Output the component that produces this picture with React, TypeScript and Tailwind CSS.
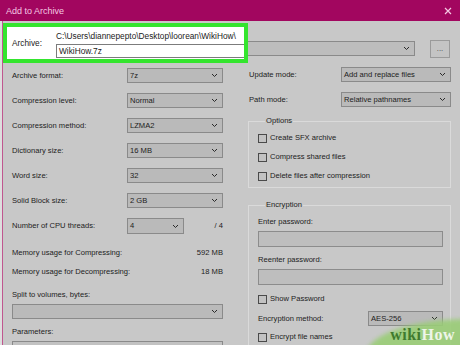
import React from 'react';

const Chevron: React.FC = () => (
  <svg width="7" height="5" viewBox="0 0 7 5" className="shrink-0">
    <path d="M1 1 L3.5 3.5 L6 1" fill="none" stroke="#2a2a2a" strokeWidth="1" />
  </svg>
);

const Combo: React.FC<{ value?: string; className?: string }> = ({ value = '', className = '' }) => (
  <div
    className={`flex items-center justify-between h-[15px] bg-[#bababa] border border-[#8a8a8a] pl-[2px] pr-[4px] ${className}`}
  >
    <span className="leading-[10px] text-[#1c1c1c]">{value}</span>
    <Chevron />
  </div>
);

const Row: React.FC<{ label: string; value: string; className?: string }> = ({ label, value, className = '' }) => (
  <div className={`flex items-center ${className}`}>
    <span className="w-[115px] leading-[10px]">{label}</span>
    <Combo value={value} className="w-[96px]" />
  </div>
);

const Check: React.FC<{ label: string; className?: string }> = ({ label, className = '' }) => (
  <div className={`flex items-center gap-[3px] h-[10px] ${className}`}>
    <span className="w-[9px] h-[9px] border border-[#4a4a4a] bg-[#c2c2c2]" />
    <span className="leading-[10px]">{label}</span>
  </div>
);

export default function App() {
  return (
    <div
      className="relative w-[460px] h-[345px] overflow-hidden bg-[#c8c8c8] text-[#1c1c1c] text-[7.6px]"
      style={{ fontFamily: '"Liberation Sans", Arial, sans-serif' }}
    >
      {/* title bar */}
      <div className="flex items-center justify-between h-[21px] bg-[#a2065f] pl-[6px] pr-[8px]">
        <span className="text-[9px] text-[#f4c8e2] leading-[12px]">Add to Archive</span>
        <svg width="8" height="8" viewBox="0 0 8 8">
          <path d="M1 1 L7 7 M7 1 L1 7" stroke="#f4c8e2" strokeWidth="1.2" />
        </svg>
      </div>

      <div className="flex h-[324px]">
        <div className="w-[2px] bg-[#dedede]" />
        <div className="w-[1px] bg-[#c0578f]" />

        <div className="flex-1 flex flex-col">
          {/* archive row */}
          <div className="flex items-start mt-[2px]">
            <div className="w-[245px] h-[40px] border-4 border-[#34e52e] bg-white flex items-center pl-[5px]">
              <span className="w-[44px] text-[8.3px] leading-[10px] text-[#222]">Archive:</span>
              <div className="flex-1 flex flex-col pt-[1px]">
                <span className="text-[8.3px] leading-[12px] text-[#222]">
                  C:\Users\diannepepto\Desktop\loorean\WikiHow\
                </span>
                <div className="mt-[2px] h-[14px] border border-[#7c7c7c] border-r-0 bg-white pl-[2px] flex items-center">
                  <span className="text-[8.3px] leading-[10px] text-[#222]">WikiHow.7z</span>
                </div>
              </div>
            </div>
            <div className="flex-1 mt-[18px] h-[15px] border-y border-r border-[#8a8a8a] bg-[#bdbdbd] flex items-center justify-end pr-[4px]">
              <Chevron />
            </div>
            <div className="ml-[15px] mr-[10px] mt-[17px] w-[20px] h-[18px] border border-[#9a9a9a] bg-[#c4c4c4] flex items-center justify-center">
              <span className="leading-[8px] text-[#444]">...</span>
            </div>
          </div>

          {/* two columns */}
          <div className="flex mt-[4px]">
            {/* left column */}
            <div className="w-[237px] pl-[9px] flex flex-col">
              <Row label="Archive format:" value="7z" className="mt-[1px]" />
              <Row label="Compression level:" value="Normal" className="mt-[10px]" />
              <Row label="Compression method:" value="LZMA2" className="mt-[10px]" />
              <Row label="Dictionary size:" value="16 MB" className="mt-[10px]" />
              <Row label="Word size:" value="32" className="mt-[10px]" />
              <Row label="Solid Block size:" value="2 GB" className="mt-[10px]" />
              <div className="flex items-center mt-[10px] w-[211px]">
                <span className="w-[115px] leading-[10px]">Number of CPU threads:</span>
                <Combo value="4" className="w-[57px] h-[16px]" />
                <span className="flex-1 text-right leading-[10px]">/ 4</span>
              </div>
              <div className="flex justify-between w-[211px] mt-[14px] leading-[10px]">
                <span>Memory usage for Compressing:</span>
                <span>592 MB</span>
              </div>
              <div className="flex justify-between w-[211px] mt-[9px] leading-[10px]">
                <span>Memory usage for Decompressing:</span>
                <span>18 MB</span>
              </div>
              <span className="mt-[13px] leading-[10px]">Split to volumes, bytes:</span>
              <Combo className="w-[211px] mt-[4px]" />
              <span className="mt-[8px] leading-[10px]">Parameters:</span>
              <div className="w-[211px] h-[15px] mt-[4px] border border-[#8a8a8a] bg-[#c2c2c2]" />
            </div>

            {/* right column */}
            <div className="flex-1 pl-[9px] flex flex-col">
              <div className="flex items-center">
                <span className="w-[92px] leading-[10px]">Update mode:</span>
                <Combo value="Add and replace files" className="w-[110px]" />
              </div>
              <div className="flex items-center mt-[10px]">
                <span className="w-[92px] leading-[10px]">Path mode:</span>
                <Combo value="Relative pathnames" className="w-[110px]" />
              </div>

              <fieldset className="ml-[-1px] w-[203px] mt-[9px] border border-[#dadada] pl-[9px] pr-[7px] pb-[6px]">
                <legend className="ml-[7px] px-[1px] leading-[10px]">Options</legend>
                <Check label="Create SFX archive" className="mt-[7px]" />
                <Check label="Compress shared files" className="mt-[9px]" />
                <Check label="Delete files after compression" className="mt-[9px]" />
              </fieldset>

              <fieldset className="ml-[-1px] w-[203px] mt-[12px] border border-[#dadada] pl-[9px] pr-[7px] pb-[10px]">
                <legend className="ml-[7px] px-[1px] leading-[10px]">Encryption</legend>
                <div className="mt-[7px] leading-[10px]">Enter password:</div>
                <div className="mt-[4px] h-[16px] border border-[#8c8c8c] bg-[#bebebe]" />
                <div className="mt-[8px] leading-[10px]">Reenter password:</div>
                <div className="mt-[4px] h-[16px] border border-[#8c8c8c] bg-[#bebebe]" />
                <Check label="Show Password" className="mt-[9px]" />
                <div className="flex items-center mt-[7px]">
                  <span className="w-[110px] leading-[10px]">Encryption method:</span>
                  <Combo value="AES-256" className="flex-1" />
                </div>
                <Check label="Encrypt file names" className="mt-[6px]" />
              </fieldset>
            </div>
          </div>
        </div>
      </div>

      {/* wikiHow watermark */}
      <div className="absolute left-[366px] top-[319px] w-[205px] h-[72px] rounded-[50%] bg-[#9acd77] opacity-90 blur-[2px]" />
      <div
        className="absolute right-[5px] bottom-[2px] text-[16px] font-bold leading-[16px] tracking-[0.5px]"
        style={{ fontFamily: '"Liberation Serif", "DejaVu Serif", serif' }}
      >
        <span className="text-[#3f7a2e]">wiki</span>
        <span className="text-[#eef5e8]">How</span>
      </div>
    </div>
  );
}
